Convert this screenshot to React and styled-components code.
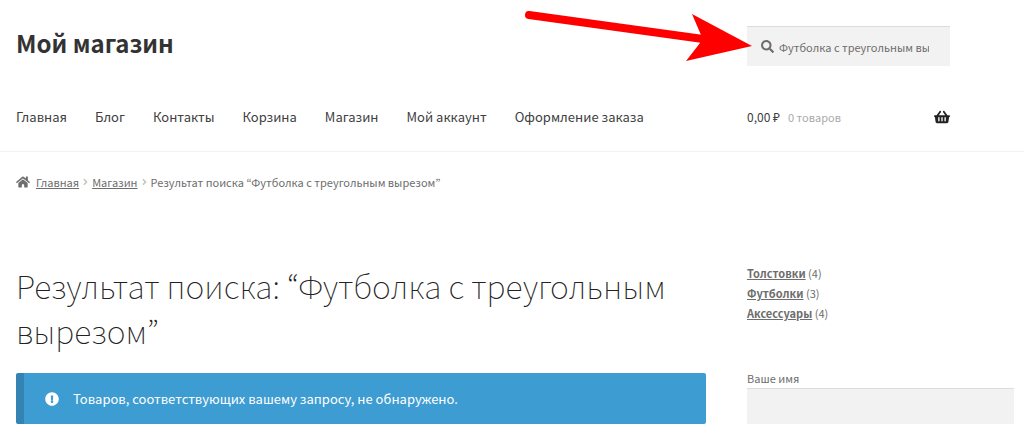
import React from 'react';
import styled, { createGlobalStyle } from 'styled-components';
import { FaHome, FaSearch, FaShoppingBasket, FaExclamationCircle, FaAngleRight } from 'react-icons/fa';

const GlobalStyle = createGlobalStyle`
  *, *::before, *::after { box-sizing: border-box; }
  body {
    margin: 0;
    background: #fff;
    color: #6d6d6d;
    font-family: "Source Sans Pro", "Noto Sans CJK KR", "Noto Sans", sans-serif;
    font-size: 11px;
    line-height: 20px;
  }
`;

const Columns = styled.div`
  display: grid;
  grid-template-columns: minmax(0, 690fr) minmax(0, 267fr);
  column-gap: 41px;
  padding: 0 10px 0 16px;
`;

const Header = styled.header`
  padding: 26px 0 20px;
  border-bottom: 1px solid #f2f2f2;
`;

const HeaderRow = styled(Columns)`
  align-items: start;
  & + & { margin-top: 37px; }
`;

const Logo = styled.a`
  color: #333;
  font-size: 24px;
  font-weight: 700;
  line-height: 34px;
  text-decoration: none;
`;

const Search = styled.form`
  position: relative;
  display: flex;
  align-items: center;
  gap: 5px;
  max-width: 203px;
  height: 40px;
  padding: 0 21px 0 14px;
  background: #f2f2f2;
  border-top: 1px solid #dcdcdc;
  color: #6d6d6d;
  font-size: 13px;
`;

const SearchInput = styled.input`
  flex: 1;
  min-width: 0;
  padding: 0;
  border: 0;
  outline: 0;
  background: transparent;
  color: #6d6d6d;
  font: inherit;
  font-size: 11px;
`;

const Arrow = styled.svg`
  position: absolute;
  top: -18px;
  left: -225px;
  width: 232px;
  height: 56px;
  pointer-events: none;
`;

const Nav = styled.nav`
  display: flex;
  flex-wrap: wrap;
  gap: 0 28px;
`;

const NavLink = styled.a`
  color: #404040;
  font-size: 13px;
  line-height: 28px;
  text-decoration: none;
  white-space: nowrap;
`;

const Cart = styled.a`
  display: flex;
  align-items: center;
  gap: 8px;
  max-width: 203px;
  color: #404040;
  font-size: 12px;
  line-height: 28px;
  text-decoration: none;
  svg { margin-left: auto; font-size: 16px; color: #222; }
`;

const Count = styled.span`
  color: #aaa;
  font-size: 11px;
`;

const Breadcrumbs = styled.nav`
  display: flex;
  align-items: center;
  gap: 4px;
  padding: 20px 16px 71px;
  color: #6d6d6d;
  a { color: inherit; }
`;

const HomeIcon = styled(FaHome)`
  margin-right: 2px;
  font-size: 14px;
`;

const Separator = styled(FaAngleRight)`
  color: #c4c4c4;
  font-size: 10px;
  width: 5px;
`;

const Title = styled.h1`
  margin: 0 0 20px;
  color: #222;
  font-size: 32px;
  font-weight: 100;
  line-height: 45px;
`;

const Notice = styled.div`
  display: flex;
  align-items: center;
  gap: 14px;
  min-height: 51px;
  padding: 12px 21px;
  border-left: 8px solid #3583b3;
  border-radius: 2px;
  background: #3d9cd2;
  color: #fff;
  font-size: 13px;
  svg { font-size: 14px; }
`;

const Categories = styled.ul`
  margin: 0 0 45px;
  padding: 0;
  list-style: none;
  a { color: inherit; font-weight: 700; }
`;

const Label = styled.label`
  display: block;
`;

const Field = styled.input`
  display: block;
  width: 100%;
  height: 36px;
  padding: 0 12px;
  border: 0;
  border-top: 1px solid #dcdcdc;
  outline: 0;
  background: #f2f2f2;
  font: inherit;
`;

const pages = ['Главная', 'Блог', 'Контакты', 'Корзина', 'Магазин', 'Мой аккаунт', 'Оформление заказа'];
const categories = [['Толстовки', 4], ['Футболки', 3], ['Аксессуары', 4]];

export default function App() {
  return (
    <>
      <GlobalStyle />
      <Header>
        <HeaderRow>
          <Logo href="#">Мой магазин</Logo>
          <Search role="search">
            <FaSearch />
            <SearchInput aria-label="Поиск" defaultValue="Футболка с треугольным вырезом" />
            <Arrow viewBox="0 0 232 56" aria-hidden="true">
              <path d="M7 6 L181 30" stroke="#f00" strokeWidth="8" strokeLinecap="round" />
              <path d="M170 5 L230 37 L164 52 L178 34 L179 26 Z" fill="#f00" />
            </Arrow>
          </Search>
        </HeaderRow>
        <HeaderRow>
          <Nav>
            {pages.map((page) => <NavLink href="#" key={page}>{page}</NavLink>)}
          </Nav>
          <Cart href="#">
            <span>0,00 ₽</span>
            <Count>0 товаров</Count>
            <FaShoppingBasket />
          </Cart>
        </HeaderRow>
      </Header>
      <Breadcrumbs>
        <HomeIcon />
        <a href="#">Главная</a>
        <Separator />
        <a href="#">Магазин</a>
        <Separator />
        <span>Результат поиска “Футболка с треугольным вырезом”</span>
      </Breadcrumbs>
      <Columns>
        <main>
          <Title>Результат поиска: “Футболка с треугольным вырезом”</Title>
          <Notice role="status">
            <FaExclamationCircle />
            <span>Товаров, соответствующих вашему запросу, не обнаружено.</span>
          </Notice>
        </main>
        <aside>
          <Categories>
            {categories.map(([name, count]) => (
              <li key={name}><a href="#">{name}</a> ({count})</li>
            ))}
          </Categories>
          <Label htmlFor="name">Ваше имя</Label>
          <Field id="name" type="text" />
        </aside>
      </Columns>
    </>
  );
}
